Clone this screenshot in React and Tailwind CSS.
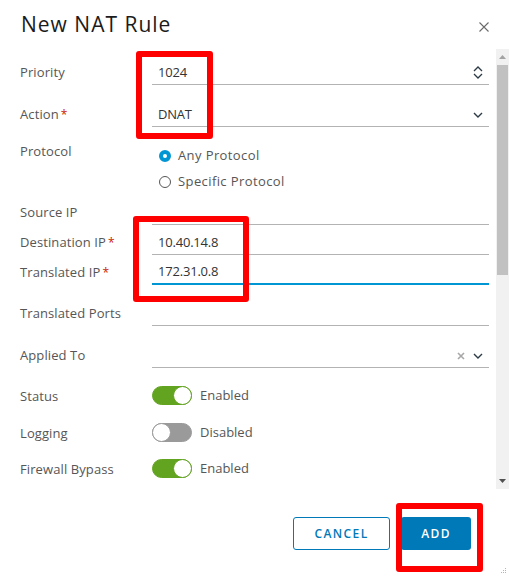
import React from "react";

const font = "font-['Open_Sans',sans-serif]";

function Label({ children, req, className = "" }) {
  return (
    <div className={`w-[132px] shrink-0 text-[13px] tracking-[0.1px] text-[#565656] ${className}`}>
      {children}
      {req && <span className="text-[#c92100] text-[12px] ml-[2px]">*</span>}
    </div>
  );
}

function Chevron() {
  return (
    <svg width="10" height="6" viewBox="0 0 10 6" fill="none">
      <path d="M1 1l4 4 4-4" stroke="#2b3a45" strokeWidth="1.4" />
    </svg>
  );
}

function Input({ value, icon, active }) {
  return (
    <div
      className={`flex-1 h-[24px] flex items-center pl-[6px] pr-[6px] ${
        active ? "border-b-2 border-[#0095d3]" : "border-b border-[#b3b3b3]"
      }`}
    >
      <span className="flex-1 text-[13px] tracking-[-0.2px] text-[#333333]">{value}</span>
      {icon}
    </div>
  );
}

function Toggle({ on }) {
  return (
    <div className="flex items-center">
      <div
        className={`w-[40px] h-[19px] rounded-full relative border ${
          on ? "bg-[#62a420] border-[#62a420]" : "bg-[#9a9a9a] border-[#9a9a9a]"
        }`}
      >
        <div
          className={`absolute top-[-1px] w-[19px] h-[19px] rounded-full bg-white border ${
            on ? "right-[-1px] border-[#62a420]" : "left-[-1px] border-[#9a9a9a]"
          }`}
        />
      </div>
      <span className="ml-[8px] mt-[1px] text-[13px] text-[#565656]">{on ? "Enabled" : "Disabled"}</span>
    </div>
  );
}

function Radio({ checked, children }) {
  return (
    <div className="h-[26px] flex items-center pl-[7px]">
      <div
        className={`w-[12px] h-[12px] rounded-full bg-white ${
          checked ? "border-[4px] border-[#0095d3]" : "border border-[#565656]"
        }`}
      />
      <span className="ml-[7px] text-[13px] tracking-[0.4px] text-[#565656]">{children}</span>
    </div>
  );
}

export default function App() {
  return (
    <div className={`w-[509px] h-[576px] bg-white relative flex flex-col overflow-hidden ${font}`}>
      <div className="h-[49px] shrink-0 flex items-center justify-between pl-[21px] pr-[20px]">
        <h1 className="text-[21px] tracking-[1px] text-[#1b1b1b] leading-none mt-[-1px]">New NAT Rule</h1>
        <svg width="10" height="10" viewBox="0 0 10 10" className="mt-[5px]">
          <path d="M0.5 0.5l9 9M9.5 0.5l-9 9" stroke="#6a6a6a" strokeWidth="1.1" />
        </svg>
      </div>

      <div className="h-[440px] shrink-0 flex">
        <div className="flex-1 pl-[20px] pr-[7px] pt-[12px] flex flex-col">
          <div className="flex items-center">
            <Label>Priority</Label>
            <Input
              value="1024"
              icon={
                <svg width="10" height="13" viewBox="0 0 10 13" fill="none">
                  <path d="M1 5l4-4 4 4M1 8l4 4 4-4" stroke="#2b3a45" strokeWidth="1.3" />
                </svg>
              }
            />
          </div>
          <div className="flex items-center mt-[18px]">
            <Label req>Action</Label>
            <Input value="DNAT" icon={<Chevron />} />
          </div>
          <div className="flex items-start mt-[14px]">
            <Label className="leading-[20px]">Protocol</Label>
            <div className="flex flex-col pt-[2px]">
              <Radio checked>Any Protocol</Radio>
              <Radio>Specific Protocol</Radio>
            </div>
          </div>
          <div className="flex items-center mt-[6px]">
            <Label>Source IP</Label>
            <Input value="" />
          </div>
          <div className="flex items-center mt-[6px]">
            <Label req>Destination IP</Label>
            <Input value="10.40.14.8" />
          </div>
          <div className="flex items-center mt-[6px]">
            <Label req>Translated IP</Label>
            <Input value="172.31.0.8" active />
          </div>
          <div className="flex items-center mt-[17px]">
            <Label>Translated Ports</Label>
            <Input value="" />
          </div>
          <div className="flex items-center mt-[18px]">
            <Label>Applied To</Label>
            <Input
              value=""
              icon={
                <div className="flex items-center gap-[8px]">
                  <svg width="8" height="8" viewBox="0 0 8 8">
                    <path d="M1 1l6 6M7 1l-6 6" stroke="#a8a8a8" strokeWidth="1.6" />
                  </svg>
                  <Chevron />
                </div>
              }
            />
          </div>
          <div className="flex items-center h-[24px] mt-[15px]">
            <Label className="pt-[4px]">Status</Label>
            <Toggle on />
          </div>
          <div className="flex items-center h-[24px] mt-[13px]">
            <Label className="pt-[4px]">Logging</Label>
            <Toggle />
          </div>
          <div className="flex items-center h-[24px] mt-[12px]">
            <Label className="pt-[4px]">Firewall Bypass</Label>
            <Toggle on />
          </div>
        </div>

        <div className="w-[13px] shrink-0 bg-[#f1f1f1] flex flex-col items-center">
          <div className="h-[16px] flex items-center justify-center">
            <svg width="7" height="4" viewBox="0 0 7 4">
              <path d="M0 4L3.5 0 7 4z" fill="#a3a3a3" />
            </svg>
          </div>
          <div className="w-[11px] h-[210px] bg-[#c1c1c1]" />
          <div className="flex-1" />
          <div className="h-[16px] flex items-center justify-center">
            <svg width="7" height="4" viewBox="0 0 7 4">
              <path d="M0 0L3.5 4 7 0z" fill="#505050" />
            </svg>
          </div>
        </div>
      </div>

      <div className="flex-1 flex justify-end items-start pt-[28px] pr-[38px] gap-[11px]">
        <button className="w-[97px] h-[33px] rounded-[3px] border border-[#0079b8] text-[#0079b8] text-[12px] font-semibold tracking-[1.4px] bg-white">
          CANCEL
        </button>
        <button className="w-[70px] h-[33px] rounded-[3px] bg-[#0079b8] text-white text-[12px] font-semibold tracking-[1.4px]">
          ADD
        </button>
      </div>

      <svg width="6" height="6" viewBox="0 0 6 6" className="absolute right-[2px] bottom-[2px]">
        <rect x="4" y="0" width="1" height="1" fill="#b5b5b5" />
        <rect x="4" y="2" width="1" height="1" fill="#b5b5b5" />
        <rect x="4" y="4" width="1" height="1" fill="#b5b5b5" />
        <rect x="2" y="4" width="1" height="1" fill="#b5b5b5" />
        <rect x="2" y="2" width="1" height="1" fill="#b5b5b5" />
        <rect x="0" y="4" width="1" height="1" fill="#b5b5b5" />
      </svg>

      <div className="absolute left-[136px] top-[51px] w-[77px] h-[88px] border-[6px] border-[#ff0000] rounded-[3px]" />
      <div className="absolute left-[133px] top-[216px] w-[116px] h-[86px] border-[6px] border-[#ff0000] rounded-[3px]" />
      <div className="absolute left-[396px] top-[503px] w-[87px] h-[69px] border-[6px] border-[#ff0000] rounded-[3px]" />
    </div>
  );
}
